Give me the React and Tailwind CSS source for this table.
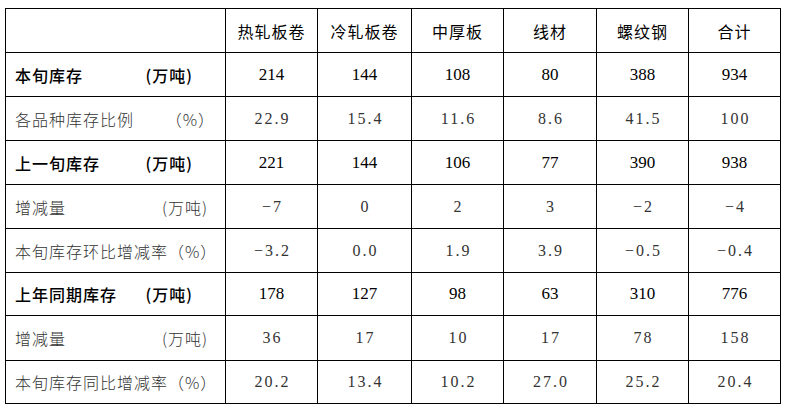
const cols = ['热轧板卷', '冷轧板卷', '中厚板', '线材', '螺纹钢', '合计']

const rows = [
  { label: '本旬库存', unit: '(万吨)', pr: 'pr-[32px]', bold: true, h: 'h-[44px]', vals: ['214', '144', '108', '80', '388', '934'] },
  { label: '各品种库存比例', unit: '（%）', pr: 'pr-[10px]', h: 'h-[44px]', vals: ['22.9', '15.4', '11.6', '8.6', '41.5', '100'] },
  { label: '上一旬库存', unit: '(万吨)', pr: 'pr-[32px]', bold: true, h: 'h-[44px]', vals: ['221', '144', '106', '77', '390', '938'] },
  { label: '增减量', unit: '(万吨)', pr: 'pr-[17px]', h: 'h-[44px]', vals: ['−7', '0', '2', '3', '−2', '−4'] },
  { label: '本旬库存环比增减率（%）', pr: 'pr-0', h: 'h-[44px]', vals: ['−3.2', '0.0', '1.9', '3.9', '−0.5', '−0.4'] },
  { label: '上年同期库存', unit: '(万吨)', pr: 'pr-[32px]', bold: true, h: 'h-[43px]', vals: ['178', '127', '98', '63', '310', '776'] },
  { label: '增减量', unit: '(万吨)', pr: 'pr-[17px]', h: 'h-[45px]', vals: ['36', '17', '10', '17', '78', '158'] },
  { label: '本旬库存同比增减率（%）', pr: 'pr-0', h: 'h-[43px]', vals: ['20.2', '13.4', '10.2', '27.0', '25.2', '20.4'] },
]

const cjk = "font-['Noto_Sans_CJK_SC',sans-serif]"
const num = "font-['Liberation_Serif','Noto_Sans_CJK_SC',serif]"

export default function App() {
  return (
    <div className="h-[415px] w-[788px] bg-white pl-[5px] pt-[8px]">
      <div className="grid w-[776px] grid-cols-[220px_92px_94px_92px_93px_92px_92px] border-l border-t border-black">
        <div className="h-[44px] border-b border-r border-black" />
        {cols.map((c) => (
          <div
            key={c}
            className={`flex h-[44px] items-center justify-center border-b border-r border-black text-[16px] tracking-[1px] text-black ${cjk}`}
          >
            {c}
          </div>
        ))}
        {rows.map((r, i) => (
          <Row key={i} r={r} />
        ))}
      </div>
    </div>
  )
}

function Row({ r }) {
  const tone = r.bold ? 'text-black font-medium' : 'text-[#333333] font-light'
  return (
    <>
      <div
        className={`flex items-center overflow-hidden whitespace-nowrap border-b border-r border-black pl-[9px] ${r.pr} ${r.h} text-[16px] tracking-[1px] ${cjk} ${tone}`}
      >
        <span>{r.label}</span>
        {r.unit && <span className="ml-auto">{r.unit}</span>}
      </div>
      {r.vals.map((v, j) => (
        <div
          key={j}
          className={`flex items-center justify-center border-b border-r border-black ${r.h} ${num} ${
            r.bold ? 'text-[17px] text-black' : 'text-[16px] tracking-[2px] text-[#333333]'
          }`}
        >
          <span className={r.bold ? '' : 'pl-[2px]'}>{v}</span>
        </div>
      ))}
    </>
  )
}
